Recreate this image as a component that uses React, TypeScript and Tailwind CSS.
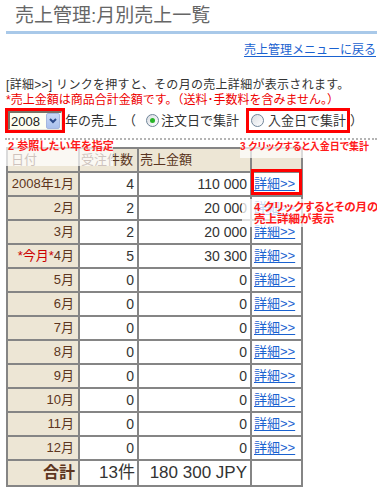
import React from "react";

const rows: { label: React.ReactNode; count: string; amount: string }[] = [
  { label: "2008年1月", count: "4", amount: "110 000" },
  { label: "2月", count: "2", amount: "20 000" },
  { label: "3月", count: "2", amount: "20 000" },
  {
    label: (
      <>
        <span className="text-[#cc0000]">*今月*</span>4月
      </>
    ),
    count: "5",
    amount: "30 300",
  },
  { label: "5月", count: "0", amount: "0" },
  { label: "6月", count: "0", amount: "0" },
  { label: "7月", count: "0", amount: "0" },
  { label: "8月", count: "0", amount: "0" },
  { label: "9月", count: "0", amount: "0" },
  { label: "10月", count: "0", amount: "0" },
  { label: "11月", count: "0", amount: "0" },
  { label: "12月", count: "0", amount: "0" },
];

function Radio({ checked }: { checked?: boolean }) {
  return (
    <span className="inline-flex items-center justify-center w-[13px] h-[13px] rounded-full border border-[#6f8499] bg-gradient-to-br from-[#d9dde2] to-[#ffffff]">
      {checked && <span className="w-[5px] h-[5px] rounded-full bg-[#28b428]" />}
    </span>
  );
}

export default function App() {
  return (
    <div className="relative w-[377px] h-[502px] bg-white overflow-hidden font-['Liberation_Sans','Noto_Sans_CJK_JP',sans-serif] text-[#333]">
      <h1 className="pl-[15px] pt-[3px] h-[31px] text-[19px] leading-[26px] text-[#666] font-normal">
        売上管理:月別売上一覧
      </h1>
      <div className="ml-[6px] h-[3px] bg-[#a9c9e9]" />
      <div className="mt-[7px] h-[18px] flex justify-end pr-[1px]">
        <a className="text-[12px] leading-[18px] text-[#1a62d0] underline underline-offset-[2px]">
          売上管理メニューに戻る
        </a>
      </div>
      <div className="mt-[18px] pl-[6px] text-[12px] leading-[16px] h-[16px] whitespace-nowrap tracking-[0.3px]">
        [詳細&gt;&gt;] リンクを押すと、その月の売上詳細が表示されます。
      </div>
      <div className="pl-[6px] text-[12px] leading-[15px] h-[15px] text-[#ee0000] whitespace-nowrap">
        *売上金額は商品合計金額です。（送料･手数料を含みません。）
      </div>
      <div className="h-[25px] flex items-center pl-[5px] text-[13px] whitespace-nowrap">
        <div className="w-[60px] h-[25px] border-[3px] border-[#ff0000] flex items-center">
          <div className="w-[54px] h-[19px] flex items-center bg-[#fffff2] border-l-2 border-t-2 border-[#767266] border-r border-b border-r-[#e4e4dc] border-b-[#e4e4dc]">
            <span className="flex-1 pl-[1px] text-[13px] leading-[15px] text-[#222]">2008</span>
            <span className="w-[14px] h-[16px] mr-[1px] rounded-[2px] bg-gradient-to-b from-[#c9d9f6] to-[#a9c0ec] border border-[#a4b7e0] flex items-center justify-center">
              <svg width="8" height="6" viewBox="0 0 8 6">
                <path d="M1 1 L4 4 L7 1" stroke="#2b4a8a" strokeWidth="2" fill="none" />
              </svg>
            </span>
          </div>
        </div>
        <span>年の売上</span>
        <span className="ml-[6px]">（</span>
        <span className="ml-[10px] flex items-center">
          <Radio checked />
          <span className="ml-[2px]">注文日で集計</span>
        </span>
        <div className="ml-[7px] w-[104px] h-[25px] border-[3px] border-[#ff0000] flex items-center pl-[2px]">
          <Radio />
          <span className="ml-[4px]">入金日で集計</span>
        </div>
        <span>）</span>
      </div>
      <div className="mt-[5px] ml-[5px] border-t-2 border-dotted border-[#b4b4b4]" />

      <div className="mt-[7px] ml-[6px] w-[297px] grid grid-cols-[70px_57px_111px_49px] gap-[2px] p-[2px] bg-[#858585]">
        <div className="h-[22px] bg-[#ede6d5] text-[13px] leading-[22px] pl-[3px] text-[#5a3522]">日付</div>
        <div className="h-[22px] bg-[#ede6d5] text-[13px] leading-[22px] pl-[1px] text-[#5a3522]">受注件数</div>
        <div className="h-[22px] bg-[#ede6d5] text-[13px] leading-[22px] pl-[1px] text-[#5a3522]">売上金額</div>
        <div className="h-[22px] bg-[#ede6d5]" />
        {rows.map((r, i) => (
          <React.Fragment key={i}>
            <div className="h-[22px] bg-[#ede6d5] text-[13px] leading-[22px] text-right pr-[4px] text-[#5c3520] whitespace-nowrap">
              {r.label}
            </div>
            <div className="h-[22px] bg-white text-[14px] leading-[22px] text-right pr-[3px]">{r.count}</div>
            <div className="h-[22px] bg-white text-[14px] leading-[22px] text-right pr-[3px]">{r.amount}</div>
            <div className="h-[22px] bg-white text-[13px] leading-[22px] pl-[2px]">
              <a className="text-[#1a62d0] underline underline-offset-[2px]">詳細&gt;&gt;</a>
            </div>
          </React.Fragment>
        ))}
        <div className="h-[24px] bg-[#ede6d5] text-[16px] leading-[24px] text-right pr-[3px] font-bold text-[#5c3520]">
          合計
        </div>
        <div className="h-[24px] bg-white text-[17px] leading-[24px] text-right pr-[2px]">13件</div>
        <div className="h-[24px] bg-white text-[17px] leading-[24px] text-right pr-[3px]">180 300 JPY</div>
        <div className="h-[24px] bg-white" />
      </div>

      {/* annotations */}
      <div className="absolute left-[4px] top-[140px] w-[109px] h-[26px] bg-white/70 pl-[4px] text-[11px] leading-[12px] font-bold text-[#ff1a1a] whitespace-nowrap [font-feature-settings:'palt']">
        2 参照したい年を指定
      </div>
      <div className="absolute left-[240px] top-[140px] w-[137px] h-[18px] bg-white/70 text-[10px] leading-[14px] font-bold text-[#ff1a1a] whitespace-nowrap [font-feature-settings:'palt']">
        3 クリックすると入金日で集計
      </div>
      <div className="absolute left-[251px] top-[169px] w-[51px] h-[26px] border-[3px] border-[#ff0000]" />
      <div className="absolute left-[242px] top-[199px] w-[126px] h-[28px] bg-white/75 pl-[12px] pt-[2px] text-[11.5px] leading-[12px] font-bold text-[#ff1a1a] whitespace-nowrap [font-feature-settings:'palt']">
        4 クリックするとその月の
        <br />
        売上詳細が表示
      </div>
    </div>
  );
}
